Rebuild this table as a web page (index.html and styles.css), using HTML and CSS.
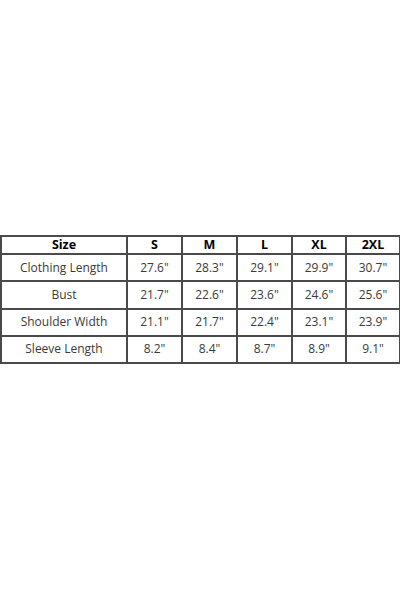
FILE: index.html
```html
<!DOCTYPE html>
<html>
<head>
<meta charset="utf-8">
<link rel="stylesheet" href="styles.css">
</head>
<body>
<div class="page">
<table class="size-table">
  <colgroup>
    <col class="c-name"><col class="c-size"><col class="c-size"><col class="c-size"><col class="c-size2"><col class="c-size2">
  </colgroup>
  <thead>
    <tr><th>Size</th><th>S</th><th>M</th><th>L</th><th>XL</th><th>2XL</th></tr>
  </thead>
  <tbody>
    <tr><td>Clothing Length</td><td>27.6"</td><td>28.3"</td><td>29.1"</td><td>29.9"</td><td>30.7"</td></tr>
    <tr><td>Bust</td><td>21.7"</td><td>22.6"</td><td>23.6"</td><td>24.6"</td><td>25.6"</td></tr>
    <tr><td>Shoulder Width</td><td>21.1"</td><td>21.7"</td><td>22.4"</td><td>23.1"</td><td>23.9"</td></tr>
    <tr><td>Sleeve Length</td><td>8.2"</td><td>8.4"</td><td>8.7"</td><td>8.9"</td><td>9.1"</td></tr>
  </tbody>
</table>
</div>
</body>
</html>
```
FILE: styles.css
```css
html, body {
  margin: 0;
  padding: 0;
  background: #ffffff;
}
.page {
  width: 400px;
  height: 600px;
  padding-top: 235px;
  box-sizing: border-box;
}
.size-table {
  border-collapse: collapse;
  table-layout: fixed;
  width: 400px;
  font-family: "Open Sans", "Liberation Sans", sans-serif;
  color: #3a3a3a;
}
.c-name { width: 126px; }
.c-size { width: 55px; }
.c-size2 { width: 54px; }
.size-table th,
.size-table td {
  border: 2px solid #4a4a4a;
  text-align: center;
  padding: 0;
  white-space: nowrap;
}
.size-table th {
  height: 16px;
  font-weight: 700;
  font-size: 12.5px;
  color: #000000;
  line-height: 16px;
}
.size-table td {
  height: 25.25px;
  font-size: 12px;
  line-height: 16px;
}
```
